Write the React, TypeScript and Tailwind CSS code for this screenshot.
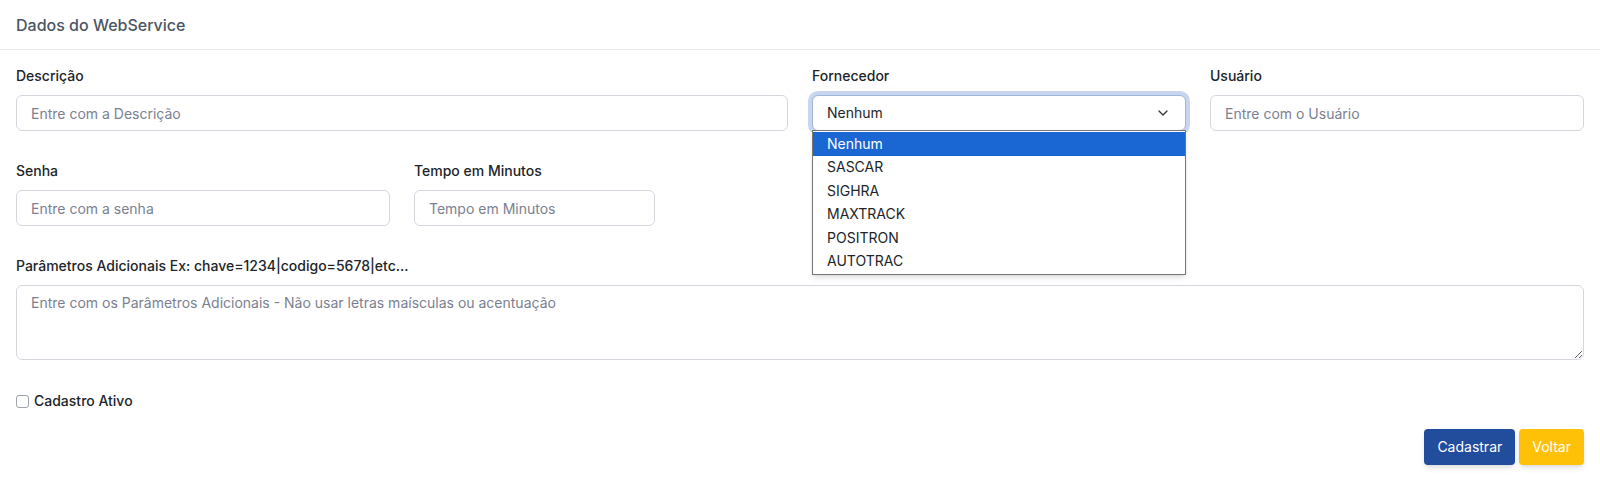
import { ChevronDown } from 'lucide-react';

const fornecedores = ['Nenhum', 'SASCAR', 'SIGHRA', 'MAXTRACK', 'POSITRON', 'AUTOTRAC'];

export default function App() {
  return (
    <div className="min-h-screen bg-white text-[#212529]" style={{ fontFamily: 'Inter, "Noto Sans", sans-serif' }}>
      <div className="h-[50px] px-4 flex items-center border-b border-[#e5e7eb]">
        <h1 className="text-base text-[#4b5563] font-medium">Dados do WebService</h1>
      </div>

      <div className="px-4 pt-4">
        <div className="grid grid-cols-12 gap-x-6">
          <Field label="Descrição" className="col-span-6">
            <TextInput placeholder="Entre com a Descrição" />
          </Field>

          <Field label="Fornecedor" className="col-span-3 relative">
            <div className="h-[36px] rounded-md border border-[#9fb5d9] ring-4 ring-[#c7d5ee] bg-white flex items-center justify-between px-[14px] text-sm">
              <span>Nenhum</span>
              <ChevronDown className="w-4 h-4 text-[#343a40]" strokeWidth={2} />
            </div>
            <div className="absolute left-0 right-0 top-[64px] z-10 bg-white border border-[#767676] shadow-md py-[1px] text-sm">
              {fornecedores.map((f, i) => (
                <div
                  key={f}
                  className={
                    i === 0
                      ? 'h-[23.5px] px-[14px] flex items-center bg-[#1a66d2] text-white'
                      : 'h-[23.5px] px-[14px] flex items-center text-[#212529]'
                  }
                >
                  {f}
                </div>
              ))}
            </div>
          </Field>

          <Field label="Usuário" className="col-span-3">
            <TextInput placeholder="Entre com o Usuário" />
          </Field>
        </div>

        <div className="grid grid-cols-12 gap-x-6 mt-[30px]">
          <Field label="Senha" className="col-span-3">
            <TextInput placeholder="Entre com a senha" />
          </Field>
          <Field label="Tempo em Minutos" className="col-span-2">
            <TextInput placeholder="Tempo em Minutos" />
          </Field>
        </div>

        <div className="mt-[30px]">
          <Field label="Parâmetros Adicionais Ex: chave=1234|codigo=5678|etc...">
            <textarea
              className="block w-full h-[75px] rounded-md border border-[#d4d8de] px-[14px] py-[7px] text-sm placeholder:text-[#7b8190] outline-none resize-y"
              placeholder="Entre com os Parâmetros Adicionais - Não usar letras maísculas ou acentuação"
            />
          </Field>
        </div>

        <label className="flex items-center gap-[5px] mt-[31px] text-sm font-medium">
          <span className="w-[13px] h-[13px] rounded-[3px] border border-[#9ca3af] bg-white inline-block" />
          Cadastro Ativo
        </label>

        <div className="flex justify-end gap-1 mt-[18px]">
          <button className="h-[36px] px-[13px] rounded-[4px] bg-[#224c9c] text-white text-sm shadow-md">Cadastrar</button>
          <button className="h-[36px] px-[13px] rounded-[4px] bg-[#ffc107] text-white text-sm shadow-md">Voltar</button>
        </div>
      </div>
    </div>
  );
}

function Field({ label, className, children }: { label: string; className?: string; children: React.ReactNode }) {
  return (
    <div className={className}>
      <div className="text-sm font-medium leading-5 mb-[9px]">{label}</div>
      {children}
    </div>
  );
}

function TextInput({ placeholder }: { placeholder: string }) {
  return (
    <input
      className="block w-full h-[36px] rounded-md border border-[#d4d8de] px-[14px] text-sm placeholder:text-[#7b8190] outline-none"
      placeholder={placeholder}
    />
  );
}
